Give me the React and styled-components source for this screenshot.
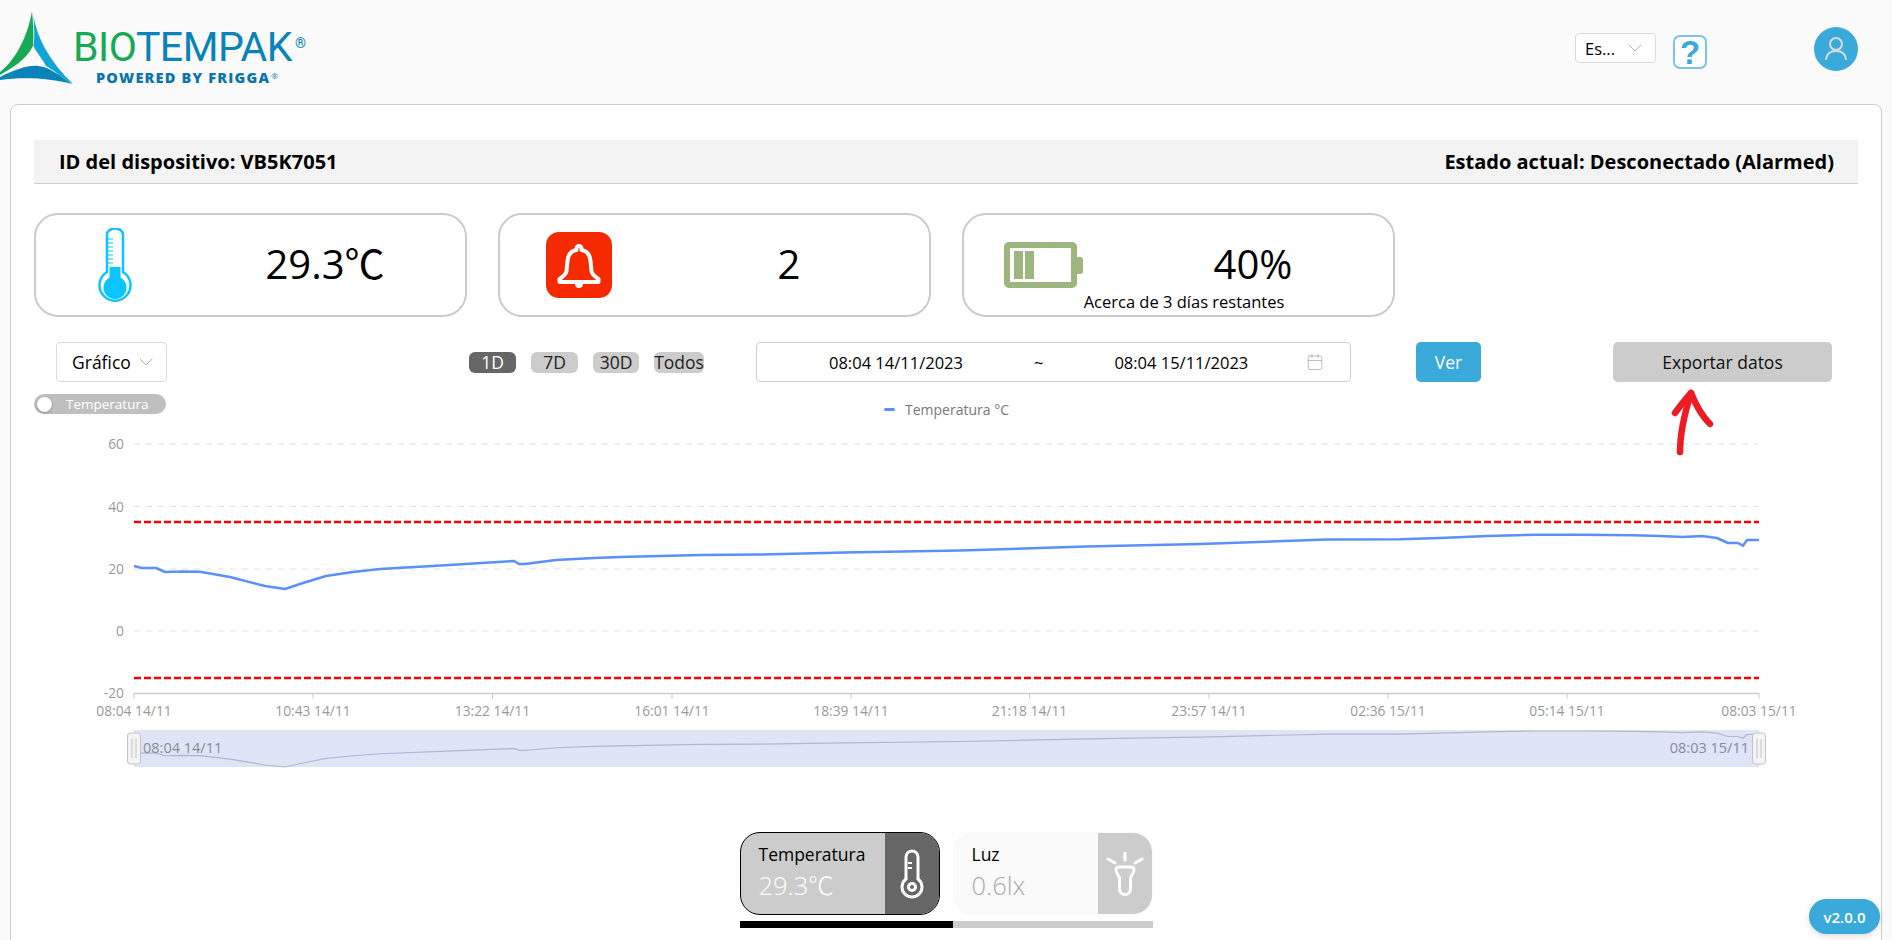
import styled, { createGlobalStyle } from "styled-components";
import { ChevronDown, Calendar } from "lucide-react";

const GlobalStyle = createGlobalStyle`
  html, body {
    margin: 0;
    height: 100%;
    overflow: hidden;
    background: #fff;
    font-family: "Open Sans", "Noto Sans CJK SC", sans-serif;
    color: #000;
  }
  * {
    box-sizing: border-box;
  }
`;

const Page = styled.div`
  position: relative;
  height: 940px;
  overflow: hidden;
  background: #fafafa;
`;

const Header = styled.header`
  height: 104px;
  display: flex;
  align-items: flex-start;
`;

const Logo = styled.div`
  display: flex;
  width: 1575px;
  padding-top: 11px;
`;

const LogoText = styled.div`
  display: flex;
  flex-direction: column;
  padding-top: 14px;
`;

const Brand = styled.div`
  font-family: Roboto, sans-serif;
  font-size: 41px;
  line-height: 44px;
  font-weight: 400;
  letter-spacing: -0.5px;
  color: #0a83b8;
  white-space: nowrap;
  span {
    color: #18a955;
  }
`;

const Powered = styled.div`
  margin: 2px 0 0 23px;
  font-size: 14.5px;
  line-height: 14px;
  font-weight: 800;
  letter-spacing: 1.2px;
  color: #0a74ad;
  white-space: nowrap;
`;

const Reg = styled.sup`
  margin-left: ${(p) => p.$gap}px;
  font-size: ${(p) => p.$size}px;
  line-height: 0;
  font-weight: 500;
  letter-spacing: 0;
  vertical-align: ${(p) => p.$rise}px;
`;

const LangSelect = styled.div`
  width: 81px;
  height: 30px;
  margin-top: 33px;
  padding: 0 8px 0 9px;
  display: flex;
  align-items: center;
  justify-content: space-between;
  background: #fff;
  border: 1px solid #d9d9d9;
  border-radius: 4px;
  font-size: 16.5px;
`;

const Help = styled.div`
  width: 34px;
  height: 34px;
  margin: 35px 0 0 17px;
  display: flex;
  align-items: center;
  justify-content: center;
  border: 2px solid #7cc3e4;
  border-radius: 7px;
  background: #fff;
  color: #3aaadb;
  font-family: "Liberation Sans", sans-serif;
  font-weight: 700;
  font-size: 33px;
  line-height: 1;
`;

const Avatar = styled.div`
  width: 44px;
  height: 44px;
  margin: 27px 0 0 107px;
  display: flex;
  align-items: center;
  justify-content: center;
  border-radius: 50%;
  background: #3aaadb;
`;

const Panel = styled.main`
  margin: 0 10px;
  padding: 35px 23px 60px;
  background: #fff;
  border: 1px solid #ccc;
  border-radius: 8px;
`;

const InfoBar = styled.div`
  height: 44px;
  padding: 0 24px 0 25px;
  display: flex;
  align-items: center;
  justify-content: space-between;
  background: #f3f3f3;
  border-bottom: 1px solid #ccc;
  font-size: 20px;
  font-weight: 700;
`;

const Cards = styled.div`
  margin-top: 29px;
  display: flex;
  gap: 31px;
`;

const Card = styled.div`
  position: relative;
  width: 433px;
  height: 104px;
  display: grid;
  grid-template-columns: 158px 262px;
  align-items: center;
  justify-items: center;
  border: 2px solid #ccc;
  border-radius: 24px;
`;

const CardValue = styled.div`
  margin-bottom: 2px;
  font-size: 40px;
  line-height: 1;
`;

const CardNote = styled.div`
  position: absolute;
  left: 0;
  right: 0;
  bottom: 3px;
  padding-left: 11px;
  text-align: center;
  font-size: 16.5px;
  line-height: 20px;
`;

const Controls = styled.div`
  margin-top: 25px;
  padding-left: 22px;
  height: 40px;
  display: flex;
  align-items: center;
`;

const ChartType = styled.div`
  width: 111px;
  height: 40px;
  padding: 0 8px 0 15px;
  display: flex;
  align-items: center;
  justify-content: space-between;
  border: 1px solid #d9d9d9;
  border-radius: 4px;
  font-size: 17.5px;
`;

const Ranges = styled.div`
  margin-left: 302px;
  display: flex;
  gap: 15px;
`;

const Range = styled.div`
  width: ${(p) => p.$w}px;
  height: 21px;
  display: flex;
  align-items: center;
  justify-content: center;
  border-radius: 6px;
  background: ${(p) => (p.$active ? "#666" : "#ccc")};
  color: ${(p) => (p.$active ? "#fff" : "#222")};
  font-size: 17.5px;
  white-space: nowrap;
`;

const DateRange = styled.div`
  width: 595px;
  height: 40px;
  margin-left: 52px;
  padding: 0 26px 0 72px;
  display: flex;
  align-items: center;
  justify-content: space-between;
  border: 1px solid #d0d0d0;
  border-radius: 4px;
  font-size: 16.5px;
`;

const DateValues = styled.div`
  display: flex;
  gap: 71px;
  white-space: nowrap;
`;

const Button = styled.div`
  width: ${(p) => p.$w}px;
  height: 40px;
  margin-left: ${(p) => p.$left}px;
  display: flex;
  align-items: center;
  justify-content: center;
  border-radius: 5px;
  background: ${(p) => (p.$primary ? "#3aaadb" : "#ccc")};
  color: ${(p) => (p.$primary ? "#fff" : "#111")};
  font-size: 17.5px;
`;

const ToggleRow = styled.div`
  margin-top: 12px;
  height: 20px;
  display: flex;
  align-items: center;
`;

const Toggle = styled.div`
  width: 132px;
  height: 20px;
  padding: 0 0 0 3px;
  display: flex;
  align-items: center;
  gap: 14px;
  border-radius: 10px;
  background: #bfbfbf;
  color: #fff;
  font-size: 13.5px;
  i {
    width: 15px;
    height: 15px;
    border-radius: 50%;
    background: #fff;
    box-shadow: 0 1px 3px rgba(0, 0, 0, 0.3);
  }
`;

const Legend = styled.div`
  margin: 10px 0 0 718px;
  display: flex;
  align-items: center;
  gap: 10px;
  font-size: 14px;
  color: #777;
  i {
    width: 11px;
    height: 3px;
    border-radius: 2px;
    background: #5b8ff9;
  }
`;

const ChartSvg = styled.svg`
  display: block;
  width: 1826px;
  height: 356px;
  text {
    font-family: "Open Sans", sans-serif;
    font-size: 13.8px;
    fill: #999;
  }
  .mini {
    font-size: 14.5px;
    fill: #868b99;
  }
`;

const Tabs = styled.div`
  margin-top: 62px;
  display: flex;
  justify-content: center;
  gap: 13px;
`;

const Tab = styled.div`
  width: 200px;
  height: 83px;
  display: flex;
  overflow: hidden;
  border: 1px solid ${(p) => (p.$active ? "#000" : "#fafafa")};
  border-radius: 20px;
  background: ${(p) => (p.$active ? "#ccc" : "#fafafa")};
`;

const TabBody = styled.div`
  flex: 1;
  padding: 9px 0 0 18px;
`;

const TabLabel = styled.div`
  font-size: 17.5px;
  line-height: 24px;
`;

const TabValue = styled.div`
  margin-top: 3px;
  font-size: 25.5px;
  line-height: 32px;
  font-weight: 300;
  color: ${(p) => (p.$active ? "#fff" : "#aaa")};
`;

const TabIcon = styled.div`
  width: 54px;
  display: flex;
  align-items: center;
  justify-content: center;
  background: ${(p) => (p.$active ? "#666" : "#ccc")};
`;

const TabBar = styled.div`
  width: 413px;
  height: 7px;
  margin: 6px auto 0;
  display: flex;
  background: #ccc;
  i {
    width: 213px;
    background: #000;
  }
`;

const Version = styled.div`
  position: absolute;
  left: 1809px;
  top: 899px;
  width: 71px;
  height: 35px;
  display: flex;
  align-items: center;
  justify-content: center;
  border-radius: 18px;
  background: #3aaadb;
  box-shadow: 0 2px 6px rgba(0, 0, 0, 0.15);
  color: #fff;
  font-size: 15px;
  font-weight: 600;
`;

const Annotation = styled.svg`
  position: absolute;
  left: 1665px;
  top: 385px;
`;

const LINE = [
  [134, 566], [142, 568], [156, 568], [165, 572], [182, 571.5], [200, 571.7], [230, 577], [265, 586], [285, 589],
  [303, 583], [326, 576], [353, 572], [380, 569], [441, 565.5], [514, 561], [519, 564], [525, 564], [556, 560],
  [594, 558], [620, 557], [700, 555], [760, 554.5], [845, 552.6], [960, 550.5], [1086, 546.6], [1200, 544],
  [1327, 539.5], [1400, 539.3], [1440, 538], [1487, 536], [1537, 534.7], [1580, 534.7], [1633, 535.3],
  [1660, 536], [1683, 537], [1702, 536], [1717, 538], [1728, 543], [1738, 543], [1743, 545.7], [1747, 540],
  [1759, 540],
];

const toPoints = (list) => list.map((p) => p.join(",")).join(" ");
const MINI_LINE = LINE.map(([x, y]) => [x, 731 + (y - 534.7) * 0.663]);

const GRID = [
  { y: 444, label: "60" },
  { y: 506.5, label: "40" },
  { y: 569, label: "20" },
  { y: 631, label: "0" },
  { y: 693, label: "-20" },
];

const TICKS = [
  { x: 134, label: "08:04 14/11" },
  { x: 313, label: "10:43 14/11" },
  { x: 492.5, label: "13:22 14/11" },
  { x: 672, label: "16:01 14/11" },
  { x: 851, label: "18:39 14/11" },
  { x: 1029.5, label: "21:18 14/11" },
  { x: 1209, label: "23:57 14/11" },
  { x: 1388, label: "02:36 15/11" },
  { x: 1567, label: "05:14 15/11" },
  { x: 1759, label: "08:03 15/11" },
];

const Handle = ({ x }) => (
  <g>
    <rect x={x - 6.5} y={733} width={13} height={31} rx={3} fill="#f4f4f4" stroke="#c4c4c4" />
    <path d={`M${x - 2} 739V758M${x + 2} 739V758`} stroke="#c4c4c4" />
  </g>
);

const Chart = () => (
  <ChartSvg viewBox="34 414 1826 356">
    {GRID.slice(0, 4).map((g) => (
      <line key={g.y} x1={134} x2={1759} y1={g.y} y2={g.y} stroke="#e2e2e2" strokeWidth="1" strokeDasharray="6 6" />
    ))}
    {GRID.map((g) => (
      <text key={g.label} x={124} y={g.y + 5} textAnchor="end">
        {g.label}
      </text>
    ))}
    <line x1={134} x2={1759} y1={522} y2={522} stroke="#f00" strokeWidth="2.5" strokeDasharray="7 3" />
    <line x1={134} x2={1759} y1={678} y2={678} stroke="#f00" strokeWidth="2.5" strokeDasharray="7 3" />
    <polyline points={toPoints(LINE)} fill="none" stroke="#5b8ff9" strokeWidth="2.5" strokeLinejoin="round" />
    <line x1={134} x2={1759} y1={693.5} y2={693.5} stroke="#ccc" strokeWidth="1.5" />
    {TICKS.map((t) => (
      <g key={t.x}>
        <line x1={t.x} x2={t.x} y1={693} y2={699} stroke="#ccc" />
        <text x={t.x} y={716} textAnchor="middle">
          {t.label}
        </text>
      </g>
    ))}
    <rect x={134} y={730} width={1625} height={37} fill="#dfe5f7" />
    <polyline points={toPoints(MINI_LINE)} fill="none" stroke="#b0b8cc" strokeWidth="1.2" />
    <text className="mini" x={143} y={753}>
      08:04 14/11
    </text>
    <text className="mini" x={1749} y={753} textAnchor="end">
      08:03 15/11
    </text>
    <Handle x={134} />
    <Handle x={1759} />
  </ChartSvg>
);

const LogoMark = () => (
  <svg width="73" height="74" viewBox="0 11 73 74">
    <path d="M32 11C28 35 16 60 0 72V75C12 68 26 60 33 46C34 34 33 22 32 11Z" fill="#18a955" />
    <path d="M33.5 16C37 38 50 62 73 84C62 78 54 70 46 66C42 58 36 52 33.5 46C35 36 34 26 33.5 16Z" fill="#0fa5d8" />
    <path d="M0 77C14 70 28 65 38 66C50 67 60 76 72 84C50 78 22 77 0 80Z" fill="#0a83b8" />
  </svg>
);

const UserIcon = () => (
  <svg width="24" height="26" viewBox="0 0 24 26" fill="none" stroke="#d6dde0" strokeWidth="2">
    <circle cx="12" cy="8" r="6" />
    <path d="M2 23C3 17 7 15 12 15C17 15 21 17 22 23" strokeLinecap="round" />
  </svg>
);

const ThermometerCard = () => (
  <svg width="34" height="74" viewBox="0 0 34 74">
    <path
      d="M9 44V6.5a8 6 0 0 1 16 0V44a15.5 15.5 0 1 1-16 0Z"
      fill="none"
      stroke="#0cc4ff"
      strokeWidth="2.5"
    />
    <path d="M9 11h6M9 15h6M9 19h6M9 23h6M9 27h6M9 31h6M9 35h6" stroke="#0cc4ff" strokeWidth="1.2" />
    <path d="M11.5 39H22.5V49.5a11.5 11.5 0 1 1-11 0Z" fill="#0cc4ff" />
  </svg>
);

const BellIcon = () => (
  <svg width="66" height="66" viewBox="0 0 66 66">
    <rect width="66" height="66" rx="13" fill="#f52a00" />
    <path
      d="M33 14a2.500 2.500 0 0 1 2.500 2.500v1.500c6 1 8.500 5 9 11l1 10c.5 4 3 5 7 8v3H13.500v-3c4-3 6.500-4 7-8l1-10c.5-6 3-10 9-11v-1.500a2.500 2.500 0 0 1 2.500-2.500Z"
      fill="none"
      stroke="#fff"
      strokeWidth="4"
      strokeLinejoin="round"
    />
    <path d="M29 51h8v1a4 4 0 0 1-8 0Z" fill="#fff" />
  </svg>
);

const BatteryIcon = () => (
  <svg width="79" height="46" viewBox="0 0 79 46">
    <rect x="3" y="3" width="67" height="40" rx="2" fill="none" stroke="#9db67f" strokeWidth="6" />
    <rect x="10" y="9" width="9" height="28" fill="#9db67f" />
    <rect x="21" y="9" width="9" height="28" fill="#9db67f" />
    <path d="M72 15h4a3 3 0 0 1 3 3v11a3 3 0 0 1-3 3h-4Z" fill="#9db67f" />
  </svg>
);

const ThermometerTab = () => (
  <svg width="24" height="50" viewBox="0 0 24 50" fill="none" stroke="#fff" strokeWidth="3">
    <path d="M6 30V8a6 6 0 0 1 12 0V30a10 10 0 1 1-12 0Z" />
    <circle cx="12" cy="38" r="3.500" />
    <path d="M8 14h4M8 19h4" strokeWidth="2" />
  </svg>
);

const TorchIcon = () => (
  <svg width="38" height="44" viewBox="0 0 38 44" fill="none" stroke="#fff" strokeWidth="3" strokeLinecap="round">
    <path d="M19 1V8M2 7L9 11M36 7L29 11" />
    <path d="M10 18C10 16 11 15 13 15H25C27 15 28 16 28 18C28 22 24.500 23 24.500 27V37a5.500 5.500 0 0 1-11 0V27C13.500 23 10 22 10 18Z" />
  </svg>
);

export default function App() {
  return (
    <Page>
      <GlobalStyle />
      <Header>
        <Logo>
          <LogoMark />
          <LogoText>
            <Brand>
              <span>BIO</span>TEMPAK
              <Reg $size={14} $rise={13} $gap={3}>
                ®
              </Reg>
            </Brand>
            <Powered>
              POWERED BY FRIGGA
              <Reg $size={8} $rise={4} $gap={1}>
                ®
              </Reg>
            </Powered>
          </LogoText>
        </Logo>
        <LangSelect>
          Es...
          <ChevronDown size={24} strokeWidth={0.9} color="#aaa" />
        </LangSelect>
        <Help>?</Help>
        <Avatar>
          <UserIcon />
        </Avatar>
      </Header>

      <Panel>
        <InfoBar>
          <span>ID del dispositivo: VB5K7051</span>
          <span>Estado actual: Desconectado (Alarmed)</span>
        </InfoBar>

        <Cards>
          <Card>
            <ThermometerCard />
            <CardValue>29.3℃</CardValue>
          </Card>
          <Card>
            <BellIcon />
            <CardValue>2</CardValue>
          </Card>
          <Card>
            <BatteryIcon />
            <CardValue>40%</CardValue>
            <CardNote>Acerca de 3 días restantes</CardNote>
          </Card>
        </Cards>

        <Controls>
          <ChartType>
            Gráfico
            <ChevronDown size={24} strokeWidth={0.9} color="#aaa" />
          </ChartType>
          <Ranges>
            <Range $w={47} $active>
              1D
            </Range>
            <Range $w={47}>7D</Range>
            <Range $w={46}>30D</Range>
            <Range $w={50}>Todos</Range>
          </Ranges>
          <DateRange>
            <DateValues>
              <span>08:04 14/11/2023</span>
              <span>~</span>
              <span>08:04 15/11/2023</span>
            </DateValues>
            <Calendar size={18} strokeWidth={1} color="#aaa" />
          </DateRange>
          <Button $w={65} $left={65} $primary>
            Ver
          </Button>
          <Button $w={219} $left={132}>
            Exportar datos
          </Button>
        </Controls>

        <ToggleRow>
          <Toggle>
            <i />
            Temperatura
          </Toggle>
          <Legend>
            <i />
            Temperatura °C
          </Legend>
        </ToggleRow>

        <Chart />

        <Tabs>
          <Tab $active>
            <TabBody>
              <TabLabel>Temperatura</TabLabel>
              <TabValue $active>29.3℃</TabValue>
            </TabBody>
            <TabIcon $active>
              <ThermometerTab />
            </TabIcon>
          </Tab>
          <Tab>
            <TabBody>
              <TabLabel>Luz</TabLabel>
              <TabValue>0.6lx</TabValue>
            </TabBody>
            <TabIcon>
              <TorchIcon />
            </TabIcon>
          </Tab>
        </Tabs>
        <TabBar>
          <i />
        </TabBar>
      </Panel>

      <Annotation width="56" height="76" viewBox="1665 385 56 76" fill="none" stroke="#ed1c24" strokeWidth="6.5" strokeLinecap="round" strokeLinejoin="round">
        <path d="M1680 452C1680 436 1685 412 1691 393" />
        <path d="M1675 413C1681 405 1686 398 1691 393C1695 403 1702 416 1710 424" />
      </Annotation>
      <Version>v2.0.0</Version>
    </Page>
  );
}
